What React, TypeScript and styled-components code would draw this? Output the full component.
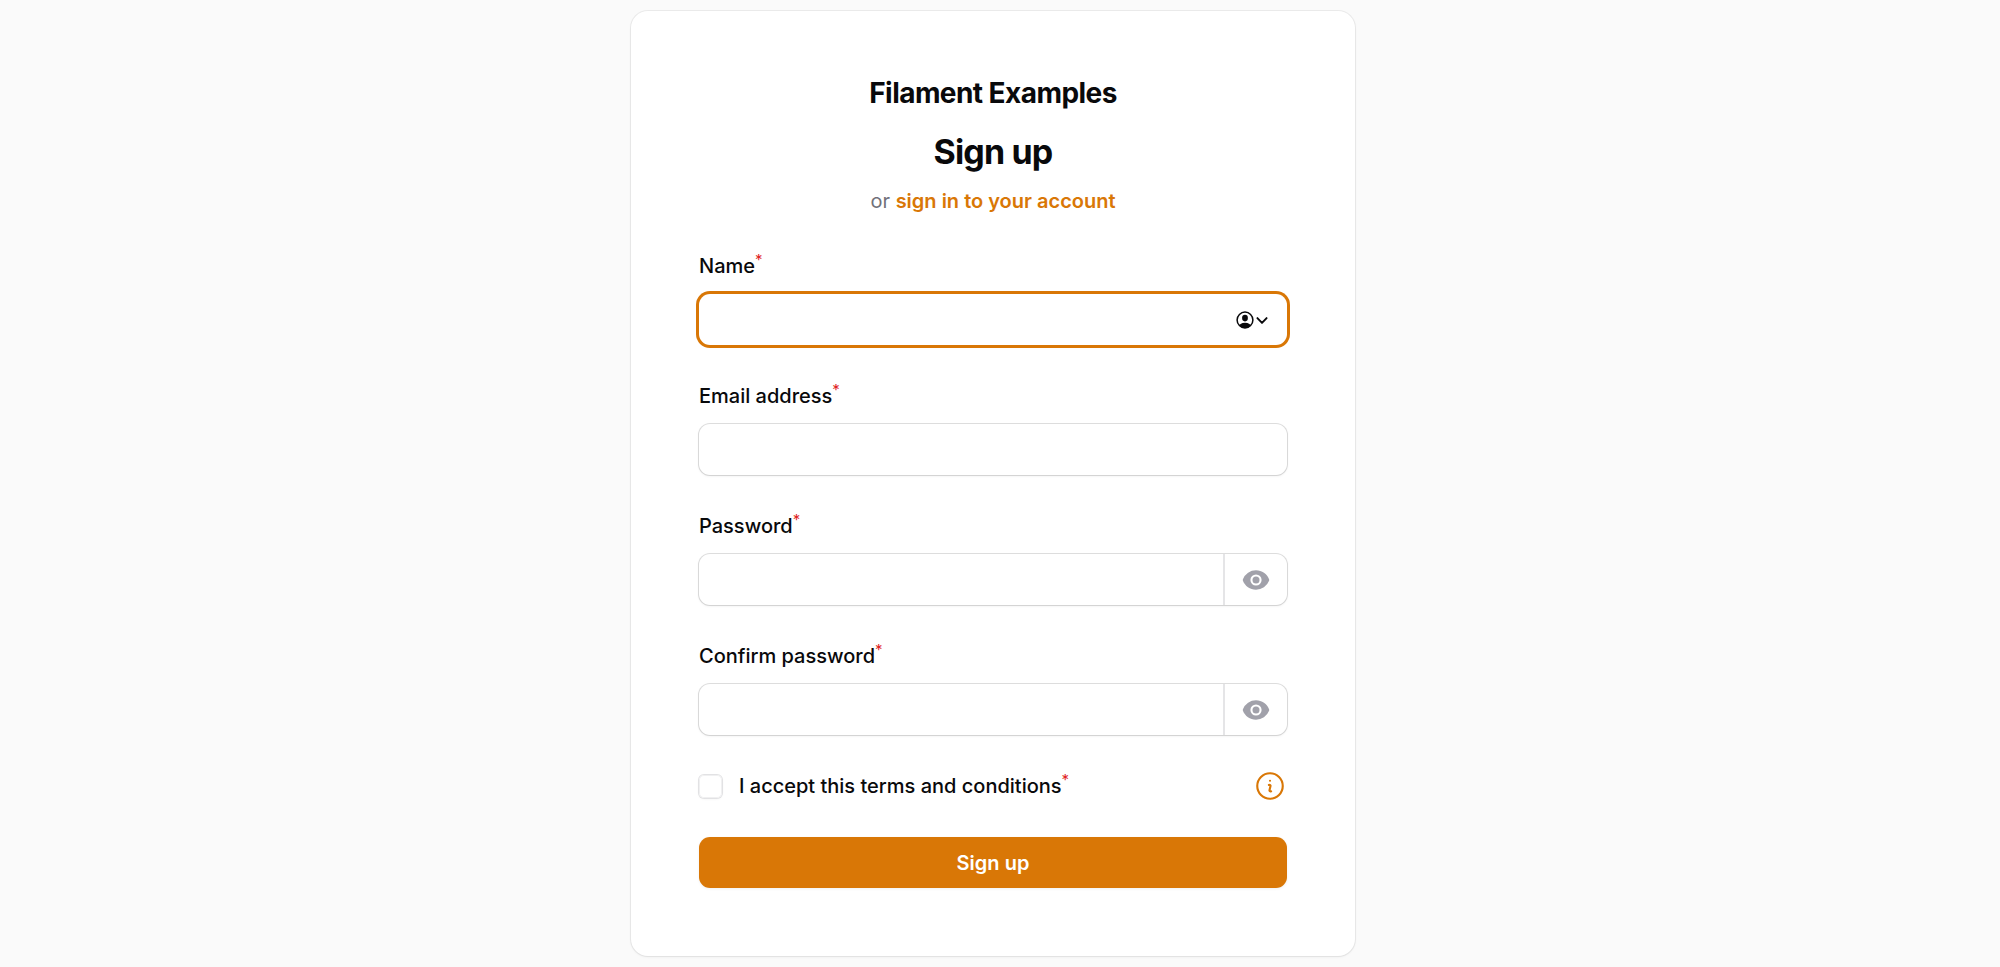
import React, { useState } from "react";
import styled, { createGlobalStyle, css } from "styled-components";
import { HiMiniEye, HiOutlineInformationCircle } from "react-icons/hi2";

const GlobalStyle = createGlobalStyle`
  *, *::before, *::after { box-sizing: border-box; }
  body {
    margin: 0;
    background: #fafafa;
    color: #09090b;
    font-family: Inter, "Liberation Sans", sans-serif;
    font-size: 20px;
    line-height: 34px;
    -webkit-font-smoothing: antialiased;
  }
  button, input { font: inherit; color: inherit; }
`;

const Page = styled.div`
  min-height: 100vh;
  display: flex;
  align-items: center;
  justify-content: center;
  padding: 11px 14px 11px 0;
`;

const Card = styled.main`
  width: 100%;
  max-width: 724px;
  padding: 68px;
  display: grid;
  gap: 34px;
  background: #fff;
  border-radius: 17px;
  box-shadow: 0 0 0 1px rgba(9, 9, 11, 0.06), 0 1px 3px rgba(0, 0, 0, 0.06);
`;

const Header = styled.header`
  display: flex;
  flex-direction: column;
  align-items: center;
  text-align: center;
`;

const Brand = styled.div`
  margin-bottom: 22px;
  font-size: 28px;
  line-height: 28px;
  font-weight: 700;
  letter-spacing: -0.02em;
`;

const Title = styled.h1`
  margin: 0;
  font-size: 34px;
  line-height: 45px;
  font-weight: 700;
  letter-spacing: -0.025em;
`;

const Subtitle = styled.p`
  margin: 13px 0 0;
  line-height: 28px;
  color: #71717a;
`;

const SignInLink = styled.a`
  color: #d97706;
  font-weight: 600;
  text-decoration: none;
  &:hover { text-decoration: underline; }
`;

const Form = styled.form`
  display: grid;
  gap: 34px;
`;

const Field = styled.div`
  display: grid;
  gap: 11px;
`;

const Label = styled.label`
  font-weight: 500;
`;

const Required = styled.sup`
  font-size: 15px;
  font-weight: 400;
  line-height: 0;
  color: #e02424;
`;

const InputBox = styled.div<{ $active?: boolean }>`
  display: flex;
  height: 51px;
  border-radius: 11px;
  background: #fff;
  ${({ $active }) =>
    $active
      ? css`box-shadow: 0 0 0 3px #d97706, 0 2px 3px rgba(0, 0, 0, 0.05);`
      : css`box-shadow: 0 0 0 1px rgba(9, 9, 11, 0.13), 0 1px 3px rgba(0, 0, 0, 0.08);`}
`;

const TextInput = styled.input`
  flex: 1;
  min-width: 0;
  padding: 0 17px;
  border: 0;
  border-radius: 11px;
  background: transparent;
  outline: none;
`;

const IconButton = styled.button`
  display: flex;
  align-items: center;
  justify-content: center;
  padding: 0;
  border: 0;
  background: transparent;
  cursor: pointer;
`;

const AutofillButton = styled(IconButton)`
  gap: 2px;
  margin-right: 19px;
`;

const RevealButton = styled(IconButton)`
  width: 64px;
  border-left: 2px solid #e5e5e7;
  color: #a1a1aa;
`;

const InfoButton = styled(IconButton)`
  margin-left: auto;
  color: #d97706;
`;

const TermsRow = styled.div`
  display: flex;
  align-items: center;
`;

const TermsLabel = styled(Label)`
  display: flex;
  align-items: center;
  gap: 17px;
`;

const Checkbox = styled.input`
  appearance: none;
  width: 23px;
  height: 23px;
  margin: 0;
  border-radius: 5px;
  background: #fff;
  box-shadow: 0 0 0 1px #e2e2e4, inset 0 0 0 1px #f0f0f1, 0 1px 3px rgba(0, 0, 0, 0.06);
  &:checked { background: #d97706; }
`;

const SubmitButton = styled.button`
  height: 51px;
  padding: 0 17px;
  border: 0;
  border-radius: 11px;
  background: #d97706;
  color: #fff;
  font-weight: 600;
  line-height: 28px;
  box-shadow: 0 1px 3px rgba(0, 0, 0, 0.06);
  cursor: pointer;
`;

function UserIcon() {
  return (
    <svg width="18" height="18" viewBox="0 0 18 18" aria-hidden="true">
      <clipPath id="user-disc"><circle cx="9" cy="9" r="8" /></clipPath>
      <circle cx="9" cy="9" r="7.9" fill="none" stroke="currentColor" strokeWidth="1.5" />
      <ellipse cx="9" cy="7.1" rx="2.9" ry="3.3" fill="currentColor" />
      <ellipse cx="9" cy="15.7" rx="6.3" ry="3.9" fill="currentColor" clipPath="url(#user-disc)" />
    </svg>
  );
}

function ChevronIcon() {
  return (
    <svg width="12" height="18" viewBox="0 0 12 18" aria-hidden="true">
      <path d="M1.4 7.1 6 11.9l4.6-4.8" fill="none" stroke="currentColor" strokeWidth="1.9" strokeLinecap="round" strokeLinejoin="round" />
    </svg>
  );
}

function PasswordField({ id, label }: { id: string; label: string }) {
  const [shown, setShown] = useState(false);
  return (
    <Field>
      <Label htmlFor={id}>{label}<Required>*</Required></Label>
      <InputBox>
        <TextInput id={id} type={shown ? "text" : "password"} autoComplete="new-password" required />
        <RevealButton type="button" aria-label="Show password" onClick={() => setShown(!shown)}>
          <HiMiniEye size={28} />
        </RevealButton>
      </InputBox>
    </Field>
  );
}

export default function App() {
  return (
    <>
      <GlobalStyle />
      <Page>
        <Card>
          <Header>
            <Brand>Filament Examples</Brand>
            <Title>Sign up</Title>
            <Subtitle>or <SignInLink href="#login">sign in to your account</SignInLink></Subtitle>
          </Header>
          <Form onSubmit={(event) => event.preventDefault()}>
            <Field>
              <Label htmlFor="name">Name<Required>*</Required></Label>
              <InputBox $active>
                <TextInput id="name" type="text" autoComplete="name" required />
                <AutofillButton type="button" aria-label="AutoFill contact">
                  <UserIcon />
                  <ChevronIcon />
                </AutofillButton>
              </InputBox>
            </Field>
            <Field>
              <Label htmlFor="email">Email address<Required>*</Required></Label>
              <InputBox>
                <TextInput id="email" type="email" autoComplete="email" required />
              </InputBox>
            </Field>
            <PasswordField id="password" label="Password" />
            <PasswordField id="password-confirmation" label="Confirm password" />
            <TermsRow>
              <TermsLabel htmlFor="terms">
                <Checkbox id="terms" type="checkbox" required />
                <span>I accept this terms and conditions<Required>*</Required></span>
              </TermsLabel>
              <InfoButton type="button" aria-label="Terms and conditions">
                <HiOutlineInformationCircle size={34} />
              </InfoButton>
            </TermsRow>
            <SubmitButton type="submit">Sign up</SubmitButton>
          </Form>
        </Card>
      </Page>
    </>
  );
}
